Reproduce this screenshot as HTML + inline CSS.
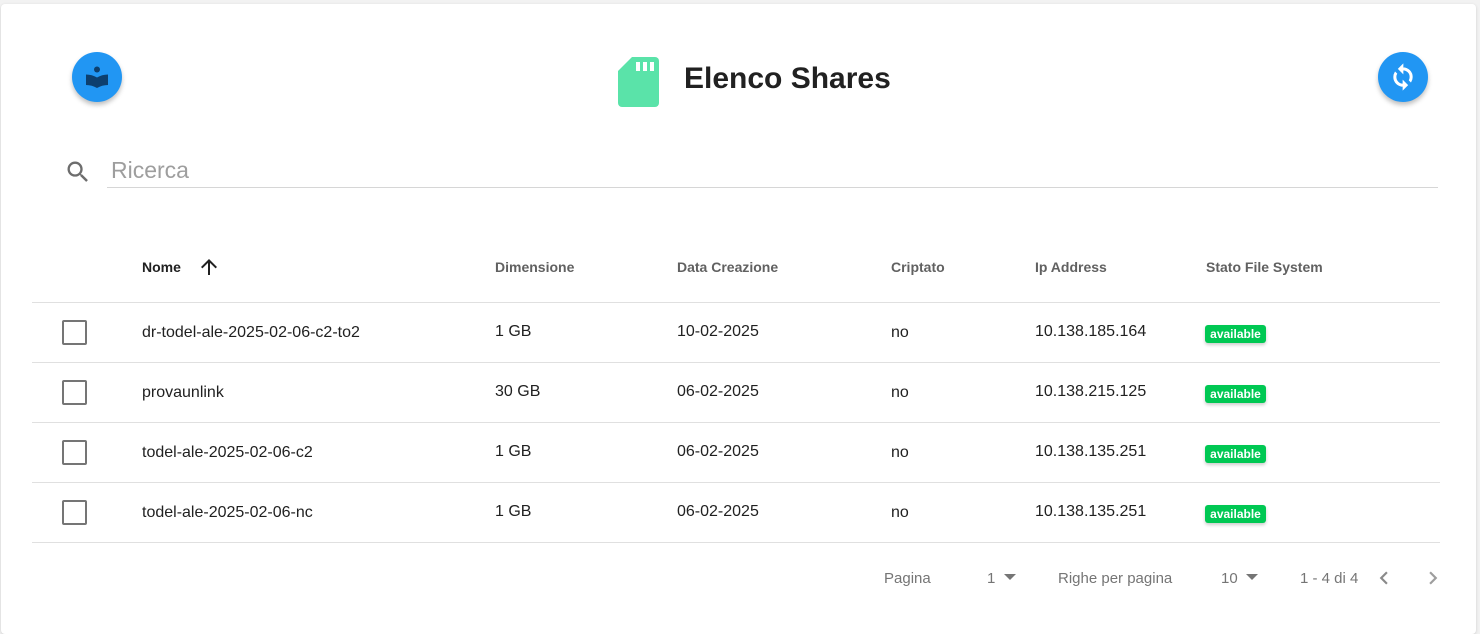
<!DOCTYPE html>
<html><head><meta charset="utf-8"><style>
*{box-sizing:border-box;margin:0;padding:0}
body{width:1480px;height:622px;background:#f2f2f2;font-family:"Liberation Sans",Arial,sans-serif;overflow:hidden;position:relative;color:#212121}
.card{position:absolute;left:1px;top:4px;width:1475px;height:630px;background:#fff;border-radius:4px;box-shadow:0 1px 3px rgba(0,0,0,.15)}
.abs{position:absolute}
.fab{position:absolute;width:50px;height:50px;border-radius:50%;background:#2196f3;box-shadow:0 3px 5px rgba(0,0,0,.25);display:flex;align-items:center;justify-content:center}
.hline{position:absolute;left:32px;width:1408px;height:1px;background:#e0e0e0}
.th{position:absolute;top:259px;font-size:14px;font-weight:bold;color:#616161}
.td{position:absolute;font-size:16px;color:#212121}
.cb{position:absolute;left:62px;width:25px;height:25px;border:2px solid #757575;border-radius:2px}
.badge{position:absolute;left:1205px;width:61px;height:18px;background:#00c853;color:#fff;border-radius:3px;font-size:12px;font-weight:bold;text-align:center;line-height:18px;box-shadow:0 2px 3px rgba(0,0,0,.2)}
.pg{position:absolute;top:570px;font-size:15px;color:#757575}
</style></head><body>
<div class="card"></div>
<div class="fab" style="left:72px;top:52px"><svg width="26" height="26" viewBox="0 0 26 26"><circle cx="13" cy="5.5" r="3" fill="#0d3f6e"/><path d="M2 10.5 Q8 10.5 13 13.5 Q18 10.5 24 10.5 V21 Q18 21 13 24 Q8 21 2 21 Z" fill="#0d3f6e"/></svg></div>
<div class="fab" style="left:1378px;top:52px"><svg width="28" height="28" viewBox="0 0 24 24"><path fill="#fff" stroke="#fff" stroke-width=".6" d="M12 4V1L8 5l4 4V6c3.31 0 6 2.69 6 6 0 1.01-.25 1.97-.7 2.8l1.46 1.46A7.93 7.93 0 0 0 20 12c0-4.42-3.58-8-8-8zm0 14c-3.31 0-6-2.690-6-6 0-1.01.25-1.970.7-2.8L5.24 7.74A7.93 7.93 0 0 0 4 12c0 4.42 3.58 8 8 8v3l4-4-4-4v3z"/></svg></div>
<svg class="abs" style="left:618px;top:57px" width="42" height="50" viewBox="0 0 42 50"><path d="M14 0H37a4 4 0 0 1 4 4V46a4 4 0 0 1-4 4H4a4 4 0 0 1-4-4V14Z" fill="#5ae3a9"/><rect x="18" y="5" width="4" height="9" fill="#fff"/><rect x="25" y="5" width="4" height="9" fill="#fff"/><rect x="32" y="5" width="4" height="9" fill="#fff"/></svg>
<div class="abs" style="left:684px;top:62px;font-size:30px;font-weight:bold;color:#212121">Elenco Shares</div>
<svg class="abs" style="left:64px;top:158px" width="28" height="28" viewBox="0 0 24 24"><path fill="#6d6d6d" d="M15.5 14h-.79l-.28-.27A6.47 6.470 0 0 0 16 9.5 6.5 6.5 0 1 0 9.5 16c1.61 0 3.09-.59 4.23-1.57l.27.28v.79l5 4.99L20.49 19l-4.99-5zm-6 0C7.01 14 5 11.99 5 9.5S7.01 5 9.5 5 14 7.01 14 9.5 11.99 14 9.5 14z"/></svg>
<div class="abs" style="left:111px;top:157px;font-size:23px;color:#9e9e9e">Ricerca</div>
<div class="abs" style="left:107px;top:187px;width:1331px;height:1px;background:#d6d6d6"></div>
<div class="th" style="left:142px;color:#212121">Nome</div>
<svg class="abs" style="left:197px;top:255px" width="24" height="24" viewBox="0 0 24 24"><path fill="#212121" d="M4 12l1.41 1.41L11 7.83V20h2V7.83l5.58 5.59L20 12l-8-8-8 8z"/></svg>
<div class="th" style="left:495px">Dimensione</div>
<div class="th" style="left:677px">Data Creazione</div>
<div class="th" style="left:891px">Criptato</div>
<div class="th" style="left:1035px">Ip Address</div>
<div class="th" style="left:1206px">Stato File System</div>
<div class="hline" style="top:302px"></div>
<div class="hline" style="top:362px"></div>
<div class="hline" style="top:422px"></div>
<div class="hline" style="top:482px"></div>
<div class="hline" style="top:542px"></div>

<div class="cb" style="top:320px"></div>
<div class="td" style="left:142px;top:324px">dr-todel-ale-2025-02-06-c2-to2</div>
<div class="td" style="left:495px;top:323px">1 GB</div>
<div class="td" style="left:677px;top:323px">10-02-2025</div>
<div class="td" style="left:891px;top:324px">no</div>
<div class="td" style="left:1035px;top:323px">10.138.185.164</div>
<div class="badge" style="top:325px">available</div>

<div class="cb" style="top:380px"></div>
<div class="td" style="left:142px;top:384px">provaunlink</div>
<div class="td" style="left:495px;top:383px">30 GB</div>
<div class="td" style="left:677px;top:383px">06-02-2025</div>
<div class="td" style="left:891px;top:384px">no</div>
<div class="td" style="left:1035px;top:383px">10.138.215.125</div>
<div class="badge" style="top:385px">available</div>

<div class="cb" style="top:440px"></div>
<div class="td" style="left:142px;top:444px">todel-ale-2025-02-06-c2</div>
<div class="td" style="left:495px;top:443px">1 GB</div>
<div class="td" style="left:677px;top:443px">06-02-2025</div>
<div class="td" style="left:891px;top:444px">no</div>
<div class="td" style="left:1035px;top:443px">10.138.135.251</div>
<div class="badge" style="top:445px">available</div>

<div class="cb" style="top:500px"></div>
<div class="td" style="left:142px;top:504px">todel-ale-2025-02-06-nc</div>
<div class="td" style="left:495px;top:503px">1 GB</div>
<div class="td" style="left:677px;top:503px">06-02-2025</div>
<div class="td" style="left:891px;top:504px">no</div>
<div class="td" style="left:1035px;top:503px">10.138.135.251</div>
<div class="badge" style="top:505px">available</div>

<div class="pg" style="left:884px">Pagina</div>
<div class="pg" style="left:987px">1</div>
<svg class="abs" style="left:1003px;top:574px" width="14" height="7"><path d="M1 0h12L7 6z" fill="#757575"/></svg>
<div class="pg" style="left:1058px">Righe per pagina</div>
<div class="pg" style="left:1221px">10</div>
<svg class="abs" style="left:1245px;top:574px" width="14" height="7"><path d="M1 0h12L7 6z" fill="#757575"/></svg>
<div class="pg" style="left:1300px">1 - 4 di 4</div>
<svg class="abs" style="left:1371px;top:565px" width="26" height="26" viewBox="0 0 24 24"><path fill="#8a8a8a" d="M15.41 7.41L14 6l-6 6 6 6 1.41-1.41L10.83 12z"/></svg>
<svg class="abs" style="left:1420px;top:565px" width="26" height="26" viewBox="0 0 24 24"><path fill="#9e9e9e" d="M10 6L8.59 7.41 13.17 12l-4.58 4.59L10 18l6-6z"/></svg>
</body></html>
